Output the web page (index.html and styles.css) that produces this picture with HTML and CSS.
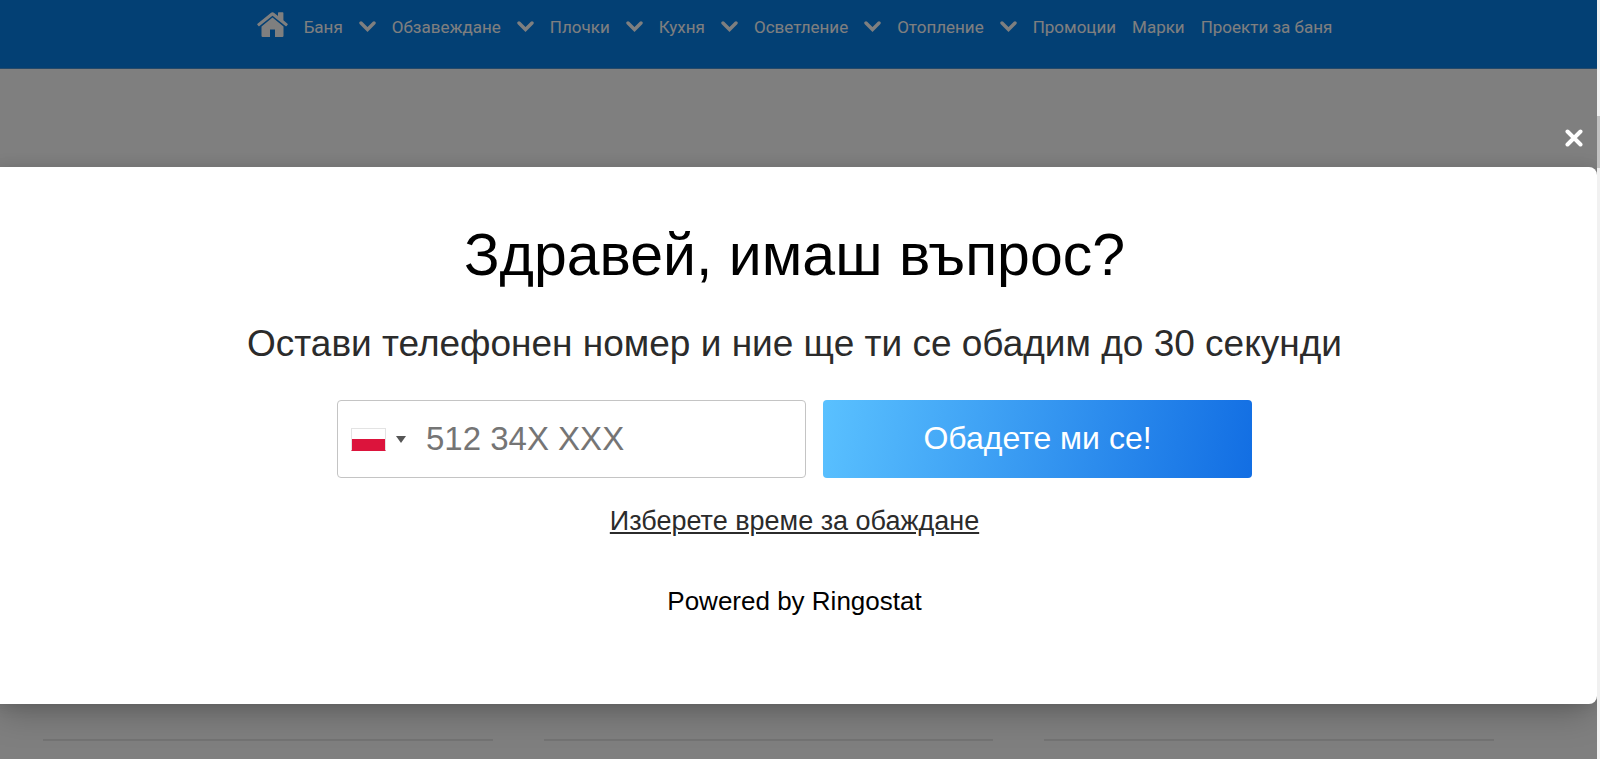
FILE: index.html
```html
<!DOCTYPE html>
<html lang="bg">
<head>
<meta charset="utf-8">
<title>Здравей, имаш въпрос?</title>
<link rel="stylesheet" href="styles.css">
</head>
<body>
<svg class="defs" aria-hidden="true">
  <symbol id="chevron" viewBox="0 0 17 11"><path d="M2 2l6.500 6.500L15 2" fill="none" stroke="currentColor" stroke-width="3.400" stroke-linecap="round" stroke-linejoin="miter"/></symbol>
</svg>
<div class="viewport">
  <div class="page">
    <nav class="nav">
      <a class="home" href="#" aria-label="Начало"><svg viewBox="0 0 31 25" width="31" height="25" fill="currentColor"><path d="M15.500 5.500L4.500 14.500v9.300q0 1.200 1.200 1.200H13v-7.500h5V25h7.300q1.200 0 1.200-1.200v-9.300z"/><path d="M.5 11.700L13.800.9q1.700-1.300 3.400 0L21 4V1q0-.7.700-.7h4q.7 0 .7.700v7.300l4.100 3.400q.6.500.1 1l-1 1.200q-.5.500-1.100 0L15.500 3.700 2.500 13.900q-.6.500-1.100 0l-1-1.200q-.5-.5.100-1z"/></svg></a>
      <a href="#">Баня</a><button class="toggle" aria-label="Баня: подменю"><svg><use href="#chevron"/></svg></button>
      <a href="#">Обзавеждане</a><button class="toggle" aria-label="Обзавеждане: подменю"><svg><use href="#chevron"/></svg></button>
      <a href="#">Плочки</a><button class="toggle" aria-label="Плочки: подменю"><svg><use href="#chevron"/></svg></button>
      <a href="#">Кухня</a><button class="toggle" aria-label="Кухня: подменю"><svg><use href="#chevron"/></svg></button>
      <a href="#">Осветление</a><button class="toggle" aria-label="Осветление: подменю"><svg><use href="#chevron"/></svg></button>
      <a href="#">Отопление</a><button class="toggle" aria-label="Отопление: подменю"><svg><use href="#chevron"/></svg></button>
      <a href="#">Промоции</a>
      <a href="#">Марки</a>
      <a href="#">Проекти за баня</a>
    </nav>
    <main class="content">
      <div class="columns"><hr><hr><hr></div>
    </main>
  </div>
  <div class="overlay">
    <button class="close" aria-label="Затвори"><svg viewBox="0 0 18 18" width="18" height="18"><path d="M2.500 2.500l13 13M15.500 2.500l-13 13" stroke="currentColor" stroke-width="4" stroke-linecap="round"/></svg></button>
    <section class="modal" role="dialog" aria-labelledby="title">
      <h1 id="title">Здравей, имаш въпрос?</h1>
      <p class="lead">Остави телефонен номер и ние ще ти се обадим до 30 секунди</p>
      <form class="form">
        <div class="field">
          <button type="button" class="country" aria-label="Полша"><span class="flag"></span><span class="caret"></span></button>
          <input class="phone" type="tel" aria-label="Телефонен номер" placeholder="512 34X XXX">
        </div>
        <button type="button" class="submit">Обадете ми се!</button>
      </form>
      <a class="schedule" href="#">Изберете време за обаждане</a>
      <a class="powered" href="#">Powered by Ringostat</a>
    </section>
  </div>
</div>
<div class="scrollbar" aria-hidden="true"><div class="thumb"></div></div>
</body>
</html>
```
FILE: styles.css
```css
* { box-sizing: border-box; }
body {
  margin: 0;
  display: flex;
  height: 100vh;
  overflow: hidden;
  font-family: "Liberation Sans", Arial, sans-serif;
}
button { border: 0; padding: 0; background: none; font: inherit; color: inherit; }
a { color: inherit; text-decoration: none; }
svg { display: block; }
.defs { position: absolute; width: 0; height: 0; }

.viewport { position: relative; flex: 1; overflow: hidden; }
.page { display: flex; flex-direction: column; height: 100%; background: #fff; }

.nav {
  display: flex;
  justify-content: center;
  gap: 16px;
  height: 69px;
  padding: 12px 8px 0 0;
  border-bottom: 1px solid #4a92d2;
  background: #0780e8;
  color: #fff;
  font: 17px/30px Roboto, sans-serif;
  white-space: nowrap;
}
.toggle svg { width: 17px; height: 11px; }
.toggle { height: 28px; }

.content { flex: 1; display: flex; flex-direction: column; justify-content: flex-end; padding: 0 103px 18px 43px; }
.columns { display: grid; grid-template-columns: repeat(3, 1fr); gap: 51px; }
.columns hr { width: 100%; height: 2px; margin: 0; border: 0; background: #e6e6e6; }

.overlay {
  position: absolute;
  inset: 0;
  display: flex;
  flex-direction: column;
  background: rgba(0, 0, 0, .5);
}
.close { align-self: flex-end; margin: 129px 14px 20px 0; color: #fff; }

.modal {
  display: flex;
  flex-direction: column;
  align-items: center;
  margin-left: -8px;
  padding: 56px 24px 88px;
  border-radius: 8px;
  background: #fff;
  box-shadow: 0 16px 32px -8px rgba(0, 0, 0, .25), 0 0 16px rgba(0, 0, 0, .12);
  color: #000;
}
.modal h1 { margin: 0; font-size: 59px; font-weight: 400; line-height: 64px; }
.lead { margin: 36px 0 0; font-size: 37px; line-height: 42px; color: #2b2b2b; }

.form { display: grid; grid-template-columns: 469fr 429fr; gap: 17px; width: 915px; max-width: 100%; height: 78px; margin-top: 35px; font-size: 32px; }
.field { display: flex; min-width: 0; border: 1px solid #c4c4c4; border-radius: 4px; }
.country { display: flex; align-items: center; gap: 10px; padding: 0 20px 0 13px; }
.flag { width: 35px; height: 23px; border: 1px solid #e3e3e3; border-bottom-color: #dc143c; background: linear-gradient(#fff 50%, #dc143c 50%); }
.caret { border: 5px solid transparent; border-top: 7px solid #555; border-bottom: 0; }
.phone { flex: 1; min-width: 0; border: 0; padding: 0; background: none; font: inherit; font-size: 33px; }
.phone::placeholder { color: #757575; opacity: 1; }
.submit { padding-bottom: 2px; border-radius: 4px; background: linear-gradient(100deg, #5ac1ff, #126ee3); color: #fff; }

.schedule { margin-top: 28px; font-size: 27px; line-height: 30px; color: #2b2b2b; text-decoration: underline; }
.powered { margin-top: 50px; font-size: 26px; line-height: 30px; }

.scrollbar { width: 3px; padding-top: 116px; background: #f1f1f1; }
.thumb { height: 52px; background: #c1c1c1; }
```
